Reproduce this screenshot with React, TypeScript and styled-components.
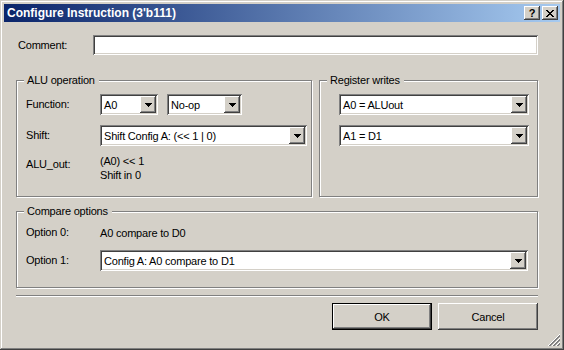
import React from 'react'
import styled, { createGlobalStyle } from 'styled-components'

const face = '#d4d0c8'
const shade = '#808080'
const dark = '#404040'

const raised = `box-shadow: inset -1px -1px ${dark}, inset 1px 1px #fff, inset -2px -2px ${shade}, inset 2px 2px ${face};`
const sunken = `box-shadow: inset 1px 1px ${shade}, inset -1px -1px #fff, inset 2px 2px ${dark}, inset -2px -2px ${face};`

const GlobalStyle = createGlobalStyle`
  html, body {
    margin: 0;
    padding: 0;
    background: ${face};
  }
  body {
    font-family: "Liberation Sans", Arial, sans-serif;
    font-size: 11px;
    letter-spacing: -0.2px;
    color: #000;
  }
  * {
    box-sizing: border-box;
  }
`

const Window = styled.div`
  position: relative;
  display: flex;
  flex-direction: column;
  width: 564px;
  height: 350px;
  padding: 4px;
  background: ${face};
  box-shadow: inset -1px -1px ${dark}, inset 1px 1px ${face}, inset -2px -2px ${shade}, inset 2px 2px #fff;
`

const TitleBar = styled.div`
  display: flex;
  align-items: center;
  height: 18px;
  padding: 0 2px 0 3px;
  background: linear-gradient(to right, #0a246a, #a6caf0);
  color: #fff;
  font-size: 12px;
  font-weight: bold;
  letter-spacing: 0;
`

const Title = styled.span`
  flex: 1;
  white-space: nowrap;
`

const CaptionButton = styled.span<{ $gap?: number }>`
  display: flex;
  align-items: center;
  justify-content: center;
  width: 16px;
  height: 14px;
  margin-left: ${({ $gap }) => $gap ?? 0}px;
  background: ${face};
  color: #000;
  font-size: 11px;
  font-weight: bold;
  line-height: 14px;
  ${raised}
`

const Body = styled.div`
  flex: 1;
  display: flex;
  flex-direction: column;
  padding: 13px 22px 0 12px;
`

const CommentRow = styled.div`
  display: flex;
  align-items: center;
  height: 20px;
`

const CommentLabel = styled.span`
  width: 77px;
  padding-left: 2px;
`

const TextInput = styled.div`
  flex: 1;
  height: 20px;
  background: #fff;
  ${sunken}
`

const GroupRow = styled.div`
  display: flex;
  gap: 7px;
  margin-top: 19px;
`

const Group = styled.fieldset<{ $w?: number; $mt?: number }>`
  width: ${({ $w }) => ($w ? `${$w}px` : 'auto')};
  min-width: 0;
  margin: ${({ $mt }) => $mt ?? 0}px 0 0 0;
  padding: 0;
  border: 1px solid ${shade};
  box-shadow: 1px 1px 0 #fff, inset 1px 1px 0 #fff;
`

const GroupTitle = styled.legend`
  margin-left: 7px;
  padding: 0 4px 0 3px;
  line-height: 13px;
  background: ${face};
`

const GroupBody = styled.div<{ $pad: string }>`
  display: flex;
  flex-direction: column;
  padding: ${({ $pad }) => $pad};
`

const FormRow = styled.div<{ $mt?: number }>`
  display: flex;
  align-items: center;
  gap: 9px;
  min-height: 21px;
  margin-top: ${({ $mt }) => $mt ?? 0}px;
`

const FieldLabel = styled.span`
  flex-shrink: 0;
  align-self: flex-start;
  width: 74px;
  margin-right: -9px;
  line-height: 21px;
`

const StaticText = styled.div`
  line-height: 14px;
`

const ComboBox = styled.div<{ $w?: number }>`
  display: flex;
  align-items: center;
  flex: ${({ $w }) => ($w ? 'none' : '1')};
  width: ${({ $w }) => ($w ? `${$w}px` : 'auto')};
  height: 21px;
  padding: 2px;
  background: #fff;
  ${sunken}
`

const ComboValue = styled.span`
  flex: 1;
  padding-left: 2px;
  white-space: nowrap;
  overflow: hidden;
`

const DropButton = styled.span`
  display: flex;
  align-items: center;
  justify-content: center;
  width: 16px;
  height: 17px;
  background: ${face};
  ${raised}
`

const Separator = styled.div`
  height: 2px;
  margin-top: 7px;
  border-top: 1px solid ${shade};
  border-bottom: 1px solid #fff;
`

const ButtonRow = styled.div`
  display: flex;
  justify-content: flex-end;
  gap: 6px;
  margin-top: 6px;
`

const PushButton = styled.button<{ $default?: boolean }>`
  width: 100px;
  height: 27px;
  padding: 0;
  border: ${({ $default }) => ($default ? '1px solid #000' : 'none')};
  background: ${face};
  color: #000;
  font-family: inherit;
  font-size: 11px;
  letter-spacing: inherit;
  ${raised}
`

const SizeGrip = styled.svg`
  position: absolute;
  right: 4px;
  bottom: 4px;
`

const Arrow = () => (
  <svg width="7" height="4" viewBox="0 0 7 4">
    <path d="M0 0h7v1H0zM1 1h5v1H1zM2 2h3v1H2zM3 3h1v1H3z" fill="#000" />
  </svg>
)

const CloseGlyph = () => (
  <svg width="8" height="7" viewBox="0 0 8 7">
    <path
      d="M0 0h2v1H0zM6 0h2v1H6zM1 1h2v1H1zM5 1h2v1H5zM2 2h4v1H2zM3 3h2v1H3zM2 4h4v1H2zM1 5h2v1H1zM5 5h2v1H5zM0 6h2v1H0zM6 6h2v1H6z"
      fill="#000"
    />
  </svg>
)

const Combo: React.FC<{ value: string; width?: number }> = ({ value, width }) => (
  <ComboBox $w={width}>
    <ComboValue>{value}</ComboValue>
    <DropButton>
      <Arrow />
    </DropButton>
  </ComboBox>
)

const App: React.FC = () => {
  return (
    <Window>
      <GlobalStyle />
      <TitleBar>
        <Title>Configure Instruction (3'b111)</Title>
        <CaptionButton>?</CaptionButton>
        <CaptionButton $gap={2}>
          <CloseGlyph />
        </CaptionButton>
      </TitleBar>

      <Body>
        <CommentRow>
          <CommentLabel>Comment:</CommentLabel>
          <TextInput />
        </CommentRow>

        <GroupRow>
          <Group $w={296}>
            <GroupTitle>ALU operation</GroupTitle>
            <GroupBody $pad="7px 4px 14px 9px">
              <FormRow>
                <FieldLabel>Function:</FieldLabel>
                <Combo value="A0" width={58} />
                <Combo value="No-op" width={75} />
              </FormRow>
              <FormRow $mt={10}>
                <FieldLabel>Shift:</FieldLabel>
                <Combo value="Shift Config A: (<< 1 | 0)" width={207} />
              </FormRow>
              <FormRow $mt={8}>
                <FieldLabel>ALU_out:</FieldLabel>
                <StaticText>
                  (A0) &lt;&lt; 1
                  <br />
                  Shift in 0
                </StaticText>
              </FormRow>
            </GroupBody>
          </Group>

          <Group $w={219}>
            <GroupTitle>Register writes</GroupTitle>
            <GroupBody $pad="7px 8px 14px 19px">
              <FormRow>
                <Combo value="A0 = ALUout" />
              </FormRow>
              <FormRow $mt={10}>
                <Combo value="A1 = D1" />
              </FormRow>
            </GroupBody>
          </Group>
        </GroupRow>

        <Group $mt={8}>
          <GroupTitle>Compare options</GroupTitle>
          <GroupBody $pad="4px 9px 16px 9px">
            <FormRow>
              <FieldLabel>Option 0:</FieldLabel>
              <StaticText>A0 compare to D0</StaticText>
            </FormRow>
            <FormRow $mt={7}>
              <FieldLabel>Option 1:</FieldLabel>
              <Combo value="Config A: A0 compare to D1" />
            </FormRow>
          </GroupBody>
        </Group>

        <Separator />

        <ButtonRow>
          <PushButton $default>OK</PushButton>
          <PushButton>Cancel</PushButton>
        </ButtonRow>
      </Body>

      <SizeGrip width="12" height="12" viewBox="0 0 12 12" shapeRendering="crispEdges">
        {[0, 4, 8].map((k) => (
          <g key={k}>
            <path d={`M${k} 12L12 ${k}`} stroke="#fff" strokeWidth="1" />
            <path d={`M${k + 1.5} 12L12 ${k + 1.5}`} stroke={shade} strokeWidth="2" />
          </g>
        ))}
      </SizeGrip>
    </Window>
  )
}

export default App
